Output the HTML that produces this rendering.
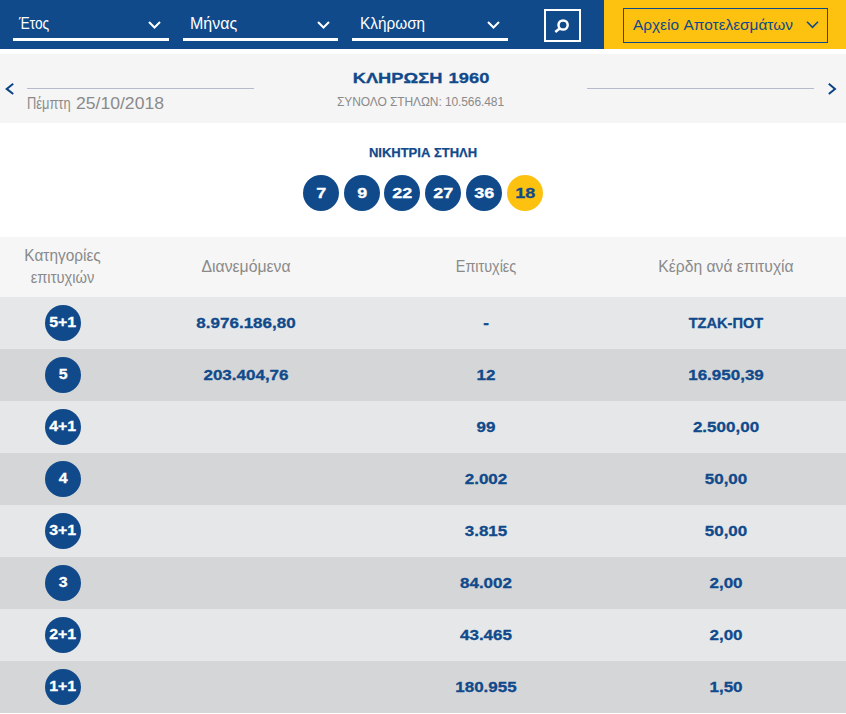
<!DOCTYPE html>
<html lang="el">
<head>
<meta charset="utf-8">
<title>Κλήρωση 1960</title>
<style>
*{box-sizing:border-box;margin:0;padding:0}
html,body{width:846px;height:714px;overflow:hidden;background:#fff}
body{font-family:"Liberation Sans",sans-serif;position:relative;color:#104a8b}
.abs{position:absolute;white-space:nowrap}
.top{position:absolute;left:0;top:0;width:846px;height:49px;background:#104a8b}
.yel{position:absolute;left:604px;top:0;width:242px;height:49px;background:#fdc110}
.sel{position:absolute;top:0;height:41px;width:156px;border-bottom:3px solid #fff;color:#fff;font-size:16.5px}
.sel span{position:absolute;left:7px;top:14px;line-height:18px;transform-origin:0 50%}
.sel svg{position:absolute;right:8px;top:21px}
.sbtn{position:absolute;left:544px;top:9px;width:37px;height:33px;border:2px solid #fff}
.arch{position:absolute;left:623px;top:8px;width:205px;height:35px;border:1px solid #104a8b;color:#104a8b;font-size:15.4px}
.arch span{position:absolute;left:9px;top:6.3px;line-height:20px;letter-spacing:0;word-spacing:1.2px}
.arch svg{position:absolute;left:182px;top:12px}
.panel{position:absolute;left:0;top:54px;width:846px;height:69px;background:#f5f5f5}
.ln{position:absolute;top:34px;height:1px;width:227px;background:#b4bccb}
.title{left:0;width:842px;text-align:center;top:12.6px;font-weight:bold;font-size:15.5px;line-height:22px;color:#104a8b;transform:scaleX(1.18);-webkit-text-stroke:.3px #104a8b;word-spacing:1px}
.sub{left:0;width:841px;text-align:center;top:40px;font-size:12px;line-height:16px;color:#8a8a8a;letter-spacing:-.1px}
.date{left:27px;top:38.6px;font-size:16px;line-height:20px;color:#8a8a8a;display:flex;align-items:baseline}
.date span{display:block;transform-origin:0 50%}
.dw{width:48.5px;transform:scaleX(.805)}
.dn{font-size:16.5px;transform:scaleX(1.065)}
.win{left:0;width:846px;text-align:center;top:145px;font-weight:bold;font-size:13px;line-height:16px;color:#104a8b;-webkit-text-stroke:.25px #104a8b}
.ball{position:absolute;top:175px;width:36px;height:36px;border-radius:50%;background:#104a8b;color:#fff;font-weight:bold;font-size:15px;line-height:35px;text-align:center}
.ball span{display:inline-block;transform:scaleX(1.2);-webkit-text-stroke:.3px #fff}
.ball.y{background:#fdc110;color:#104a8b}
.ball.y span{-webkit-text-stroke:.3px #104a8b}
.th{position:absolute;left:0;top:237px;width:846px;height:60px;background:#f6f6f6;color:#8a8a8a;font-size:16px}
.th div{position:absolute;text-align:center;line-height:22px}
.row{position:absolute;left:0;width:846px;height:52px;background:#e6e7e9;font-weight:bold;font-size:14.6px;color:#104a8b}
.row.d{background:#d5d6d8}
.row .b{position:absolute;left:45px;top:8px;width:36px;height:36px;border-radius:50%;background:#104a8b;color:#fff;text-align:center;line-height:35px;font-size:15px}
.row .b span{display:inline-block;transform:translateY(-.7px) scaleX(1.06);-webkit-text-stroke:.3px #fff}
.row .c{position:absolute;top:0;height:52px;line-height:52.3px;text-align:center;width:240px;transform:scaleX(1.165);-webkit-text-stroke:.3px #104a8b}
.row .g{transform:scaleX(1)}
.c2{left:126px}.c3{left:366px}.c4{left:606px}
</style>
</head>
<body>
<div class="top">
  <div class="sel" style="left:13px"><span style="transform:scaleX(.83);left:6px">Έτος</span><svg width="13" height="8" viewBox="0 0 13 8"><path d="M1 1 L6.5 6.5 L12 1" fill="none" stroke="#fff" stroke-width="2"/></svg></div>
  <div class="sel" style="left:183px;width:155px"><span style="transform:scaleX(.97)">Μήνας</span><svg width="13" height="8" viewBox="0 0 13 8"><path d="M1 1 L6.5 6.5 L12 1" fill="none" stroke="#fff" stroke-width="2"/></svg></div>
  <div class="sel" style="left:352px"><span style="transform:scaleX(.93);left:8px">Κλήρωση</span><svg width="13" height="8" viewBox="0 0 13 8"><path d="M1 1 L6.5 6.5 L12 1" fill="none" stroke="#fff" stroke-width="2"/></svg></div>
  <div class="sbtn"><svg width="33" height="29" viewBox="0 0 33 29"><circle cx="17.1" cy="14" r="4.6" fill="none" stroke="#fff" stroke-width="2.5"/><path d="M14 17.2 L9.3 21" stroke="#fff" stroke-width="2.5"/></svg></div>
  <div class="yel"></div>
  <div class="arch"><span>Αρχείο Αποτελεσμάτων</span><svg width="13" height="8" viewBox="0 0 13 8"><path d="M1 0.8 L6.5 6.3 L12 0.8" fill="none" stroke="#104a8b" stroke-width="1.6"/></svg></div>
</div>
<div class="panel">
  <svg class="abs" style="left:5px;top:29px" width="11" height="12" viewBox="0 0 11 12"><path d="M8.2 0.8 L1.7 5.9 L8.2 11" fill="none" stroke="#0a4386" stroke-width="2"/></svg>
  <div class="ln" style="left:27px"></div>
  <div class="abs date"><span class="dw">Πέμπτη</span><span class="dn">25/10/2018</span></div>
  <div class="abs title">ΚΛΗΡΩΣΗ 1960</div>
  <div class="abs sub">ΣΥΝΟΛΟ ΣΤΗΛΩΝ: 10.566.481</div>
  <div class="ln" style="left:587px"></div>
  <svg class="abs" style="left:827px;top:29px" width="11" height="12" viewBox="0 0 11 12"><path d="M1.8 0.8 L8 5.9 L1.8 11" fill="none" stroke="#0a4386" stroke-width="2"/></svg>
</div>
<div class="abs win">ΝΙΚΗΤΡΙΑ ΣΤΗΛΗ</div>
<div class="ball" style="left:303px"><span>7</span></div>
<div class="ball" style="left:344px"><span>9</span></div>
<div class="ball" style="left:384px"><span>22</span></div>
<div class="ball" style="left:425px"><span>27</span></div>
<div class="ball" style="left:466px"><span>36</span></div>
<div class="ball y" style="left:507px"><span>18</span></div>
<div class="th">
  <div style="left:0;width:125px;top:8px"><span style="display:block;transform:scaleX(.962)">Κατηγορίες</span><span style="display:block;transform:scaleX(.92)">επιτυχιών</span></div>
  <div style="left:126px;width:240px;top:19px;transform:scaleX(.985)">Διανεμόμενα</div>
  <div style="left:366px;width:240px;top:19px;transform:scaleX(.9)">Επιτυχίες</div>
  <div style="left:606px;width:240px;top:19px;transform:scaleX(.98)">Κέρδη ανά επιτυχία</div>
</div>
<div class="row" style="top:297px"><div class="b"><span>5+1</span></div><div class="c c2">8.976.186,80</div><div class="c c3">-</div><div class="c c4 g">ΤΖΑΚ-ΠΟΤ</div></div>
<div class="row d" style="top:349px"><div class="b"><span>5</span></div><div class="c c2">203.404,76</div><div class="c c3">12</div><div class="c c4">16.950,39</div></div>
<div class="row" style="top:401px"><div class="b"><span>4+1</span></div><div class="c c2"></div><div class="c c3">99</div><div class="c c4">2.500,00</div></div>
<div class="row d" style="top:453px"><div class="b"><span>4</span></div><div class="c c2"></div><div class="c c3">2.002</div><div class="c c4">50,00</div></div>
<div class="row" style="top:505px"><div class="b"><span>3+1</span></div><div class="c c2"></div><div class="c c3">3.815</div><div class="c c4">50,00</div></div>
<div class="row d" style="top:557px"><div class="b"><span>3</span></div><div class="c c2"></div><div class="c c3">84.002</div><div class="c c4">2,00</div></div>
<div class="row" style="top:609px"><div class="b"><span>2+1</span></div><div class="c c2"></div><div class="c c3">43.465</div><div class="c c4">2,00</div></div>
<div class="row d" style="top:661px"><div class="b"><span>1+1</span></div><div class="c c2"></div><div class="c c3">180.955</div><div class="c c4">1,50</div></div>
</body>
</html>
